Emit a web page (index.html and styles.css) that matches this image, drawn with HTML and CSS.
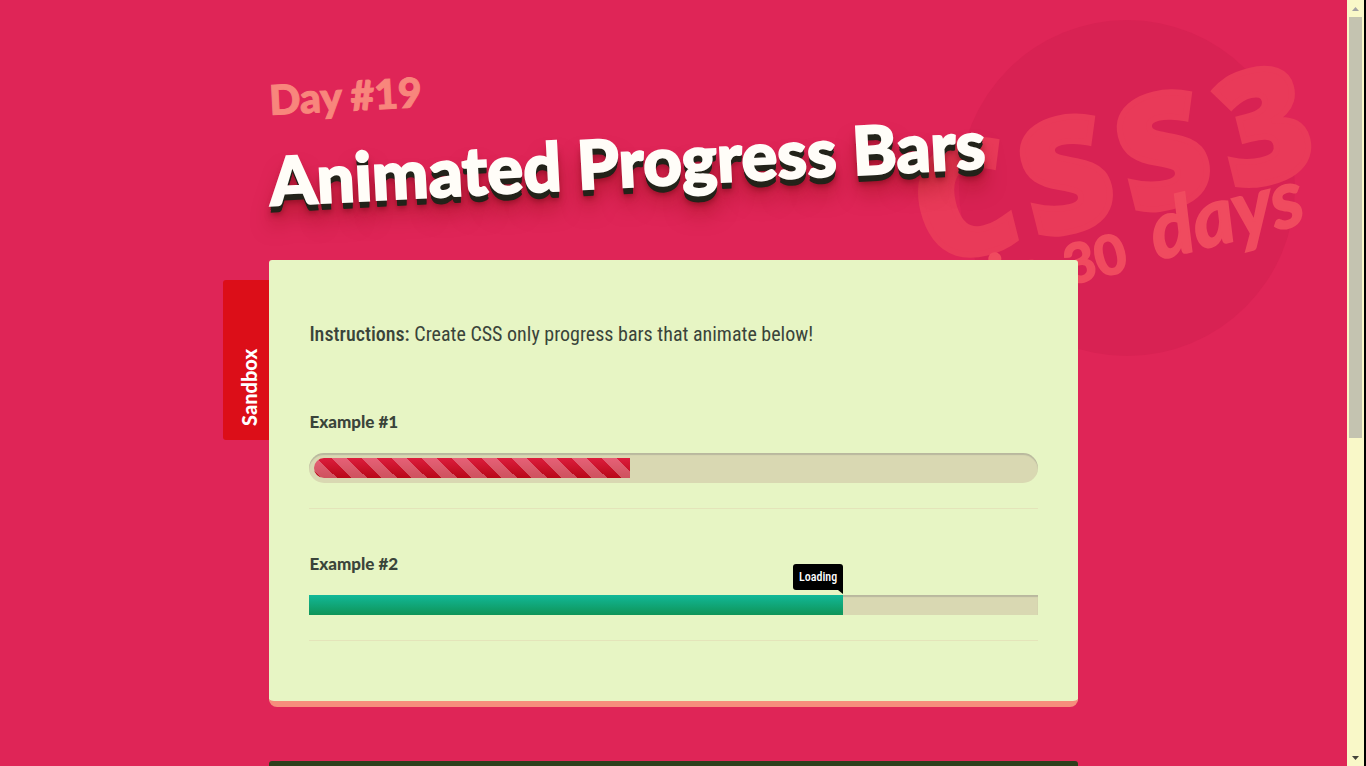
FILE: index.html
```html
<!DOCTYPE html>
<html lang="en">
<head>
  <meta charset="utf-8">
  <title>Animated Progress Bars</title>
  <link rel="stylesheet" href="styles.css">
</head>
<body>
  <div class="viewport">
    <svg class="badge" viewBox="0 0 440 360" aria-hidden="true">
      <circle class="badge-disc" cx="220" cy="188" r="168"/>
      <g class="badge-title" transform="rotate(-14)">
        <text x="-43 67 167 271" y="263">CSS3</text>
      </g>
      <g class="badge-sub">
        <text class="badge-in" transform="translate(88 308) rotate(-14)">in</text>
        <text class="badge-num" transform="translate(162 285) rotate(-14)">30</text>
        <text class="badge-days" transform="translate(250 260) rotate(-14)">days</text>
      </g>
    </svg>
    <div class="container">
      <header class="header">
        <h2 class="day">Day #19</h2>
        <h1 class="title">Animated Progress Bars</h1>
      </header>
      <main class="panel">
        <span class="tab">Sandbox</span>
        <p class="instructions"><strong>Instructions:</strong> Create CSS only progress bars that animate below!</p>
        <section class="example">
          <h3>Example #1</h3>
          <div class="bar bar-round" role="progressbar" aria-label="Example #1" aria-valuenow="44">
            <div class="fill fill-striped" style="width: 44%"></div>
          </div>
        </section>
        <section class="example">
          <h3>Example #2</h3>
          <div class="bar" role="progressbar" aria-label="Example #2" aria-valuenow="73">
            <div class="fill fill-teal" style="width: 73.3%"><span class="tooltip">Loading</span></div>
          </div>
        </section>
      </main>
      <div class="next-panel"></div>
    </div>
  </div>
  <div class="scrollbar" aria-hidden="true">
    <svg class="arrow arrow-up" viewBox="0 0 17 17"><path d="M5 11h7L8.500 7z"/></svg>
    <div class="thumb"></div>
    <svg class="arrow arrow-down" viewBox="0 0 17 17"><path d="M5 7h7l-3.500 4z"/></svg>
  </div>
</body>
</html>
```
FILE: styles.css
```css
* { box-sizing: border-box; }

body {
  margin: 0;
  height: 100vh;
  display: flex;
  overflow: hidden;
  background: #df2557;
  color: #3a443a;
  font-family: "Roboto Condensed", "Liberation Sans Narrow", Roboto, sans-serif;
}

.viewport {
  position: relative;
  flex: 1;
  overflow: hidden;
}

.badge {
  position: absolute;
  top: 0;
  right: 0;
  width: 440px;
  height: 360px;
  overflow: visible;
}
.badge-disc { fill: #d82253; }
.badge-title {
  fill: #e93a59;
  stroke: #e93a59;
  stroke-width: 6px;
  font: 800 154px "Open Sans", sans-serif;
}
.badge-sub {
  fill: #f04b5f;
  stroke: #f04b5f;
  stroke-width: 2px;
}
.badge-in { font: italic 700 72px Lato, sans-serif; }
.badge-days { font: italic 700 80px Lato, sans-serif; }
.badge-num { font: 700 54px Lato, sans-serif; }

.container {
  position: relative;
  width: 60%;
  min-width: 640px;
  margin: 0 auto;
}

.header {
  height: 260px;
  padding-top: 66px;
  white-space: nowrap;
}
.day,
.title {
  margin: 0;
  width: max-content;
  font-family: Lato, sans-serif;
  transform: rotate(-3deg);
}
.day {
  font-size: 41px;
  line-height: 60px;
  font-weight: 900;
  color: #f8867c;
  -webkit-text-stroke: 1px #f8867c;
}
.title {
  font-size: 67px;
  line-height: 70px;
  font-weight: 900;
  color: #fffdf8;
  -webkit-text-stroke: 2px #fffdf8;
  text-shadow: 0 2px 0 #23231a, 0 4px 0 #23231a, 0 6px 0 #23231a, 0 7px 0 #23231a,
    0 9px 6px rgba(90, 0, 10, .5), 0 18px 20px rgba(130, 10, 0, .5);
}

.panel {
  position: relative;
  padding: 60px 40px;
  background: #e7f5c4;
  border-bottom: 6px solid #f68d7c;
  border-radius: 3px 3px 8px 8px;
}

.tab {
  position: absolute;
  right: 100%;
  top: 20px;
  width: 46px;
  height: 160px;
  padding: 14px 6px 0 0;
  background: #dc0e18;
  border-radius: 0 3px 3px 0;
  color: #fff;
  font: 900 20px/40px Lato, sans-serif;
  writing-mode: vertical-rl;
  transform: rotate(180deg);
}

.instructions {
  margin: 0 0 19px;
  font-size: 20px;
  line-height: 28px;
}
.instructions strong { font-weight: 500; }

.example {
  padding: 40px 0 25px;
  border-bottom: 1px solid #e4e4ba;
}
.example h3 {
  margin: 0 0 16px;
  font: 900 17px/30px Lato, sans-serif;
}

.bar {
  background: #d9d8b2;
  box-shadow: inset 0 2px 1px rgba(60, 60, 80, .2);
}
.bar-round {
  padding: 5px;
  border-radius: 15px;
}
.fill {
  position: relative;
  height: 20px;
}
.fill-striped {
  border-radius: 10px 0 0 10px;
  background:
    linear-gradient(45deg, rgba(255, 255, 255, .3) 25%, transparent 25%, transparent 50%, rgba(255, 255, 255, .3) 50%, rgba(255, 255, 255, .3) 75%, transparent 75%) -12px 0 / 30px 30px,
    linear-gradient(#dc1c3c, #b80818);
}
.fill-teal { background: linear-gradient(#12b898, #0f9458); }

.tooltip {
  position: absolute;
  right: 0;
  bottom: 25px;
  padding: 0 6px;
  background: #000;
  border-radius: 3px 3px 0 3px;
  color: #fff;
  font-size: 12px;
  font-weight: 500;
  line-height: 26px;
}
.tooltip::after {
  content: "";
  position: absolute;
  right: 0;
  top: 100%;
  border-top: 4px solid #000;
  border-left: 5px solid transparent;
}

.next-panel {
  height: 60px;
  margin-top: 54px;
  background: #2e3f1c;
  border-radius: 3px 3px 0 0;
}

.scrollbar {
  width: 19px;
  display: flex;
  flex-direction: column;
  background: #f9f8c8;
  border-right: 2px solid #000;
}
.arrow {
  width: 17px;
  height: 17px;
}
.arrow-up { fill: #a3a3a3; }
.arrow-down {
  fill: #44443a;
  margin-top: auto;
}
.thumb {
  height: 55%;
  margin: 0 2px;
  background: #c4c3b0;
}
```
